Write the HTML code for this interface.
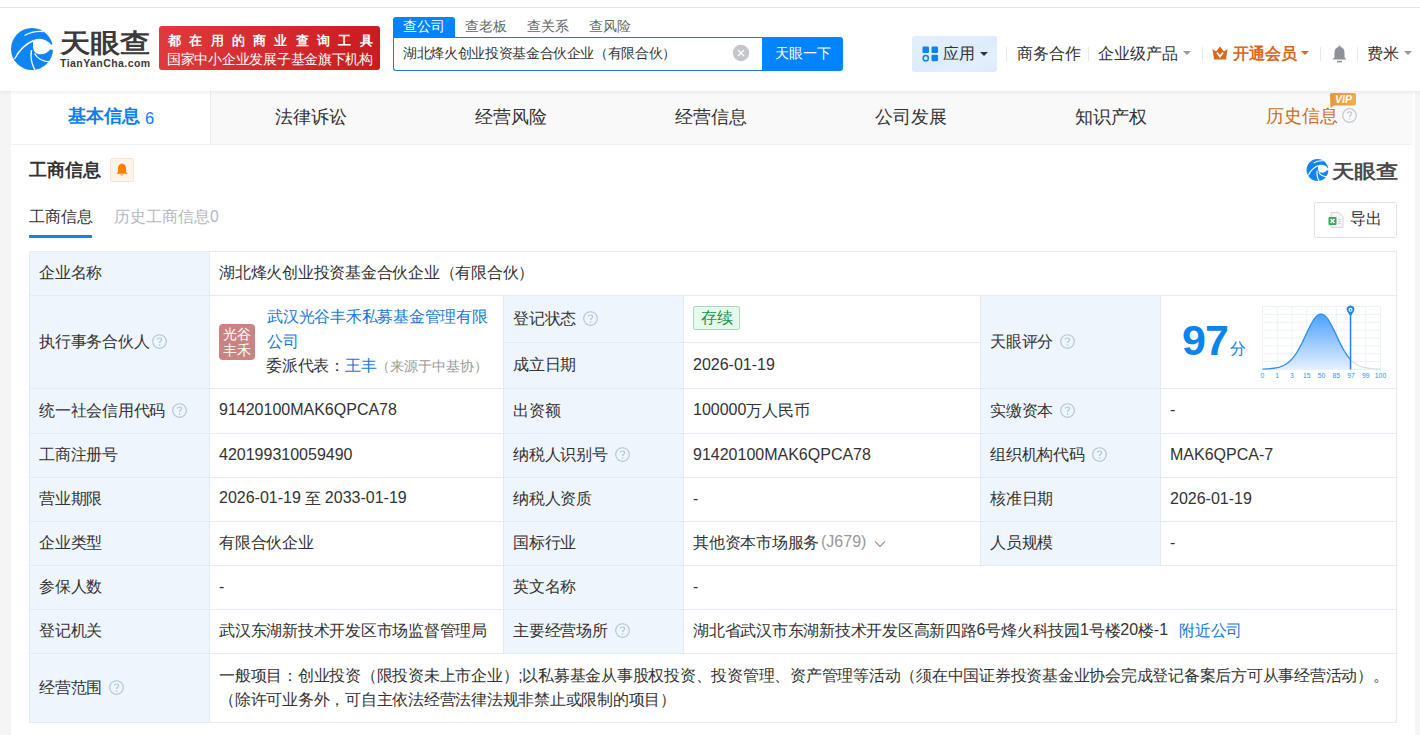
<!DOCTYPE html>
<html><head><meta charset="utf-8">
<style>
*{box-sizing:border-box;margin:0;padding:0}
html,body{width:1420px;height:735px;overflow:hidden}
body{position:relative;background:#f5f5f5;font-family:"Liberation Sans",sans-serif;color:#333;font-size:15.75px}
.a{position:absolute;white-space:nowrap}
#top{left:0;top:0;width:1420px;height:7px;background:#fff}
#topline{left:0;top:7px;width:1420px;height:1px;background:#e4e4e4}
#hdr{left:0;top:8px;width:1420px;height:83px;background:#fff;box-shadow:0 2px 4px rgba(0,0,0,.06);z-index:2}
#card{left:11px;top:91px;width:1404px;height:700px;background:#fff}
.tab{top:91px;height:53px;width:200px;background:#f9f9f9;text-align:center;line-height:53px;font-size:18px;color:#333}
.cell{position:absolute;border-right:1px solid #e4ebf3;border-bottom:1px solid #e4ebf3;padding-left:9px;display:flex;align-items:center;white-space:nowrap;letter-spacing:-0.25px}
.n{font-size:16px;letter-spacing:0;position:relative;top:-1px}
.lb{background:#eff5fc}
.q{display:inline-block;width:15px;height:15px;margin-left:7px;vertical-align:middle;position:relative;top:-1px}
.logo{position:absolute;left:9px;top:28px;width:36px;height:36px;border-radius:4px;background:#c98383;color:#fff;font-size:14px;line-height:16px;text-align:center;padding-top:2px;letter-spacing:0}
.tag{display:inline-block;height:24px;padding:0 6px 0 7px;position:relative;top:-1px;border:1px solid #a9dabb;background:#e5f9ec;color:#129a48;border-radius:2px;line-height:22px}
</style></head><body>
<div class="a" id="top"></div>
<div class="a" id="topline"></div>
<div class="a" id="hdr"></div>
<div class="a" id="card"></div>
<div class="a" style="left:0;top:0;z-index:3">
<!-- logo -->
<svg class="a" style="left:8px;top:24px" width="50" height="50" viewBox="0 0 50 50">
<circle cx="24" cy="25" r="21" fill="#0f84f5"/>
<path d="M25 17 C27 14.5 33 14 38 16.5 C41 18 42.5 19.5 43 21 L46 19 L46 26 L42 25.5 C40 29 35 31 30 30 C26.5 29 25 26 25 22Z" fill="#fff"/>
<path d="M16.5 11.5 Q25 6.5 35.5 7.5" stroke="#fff" stroke-width="1.3" fill="none"/>
<path d="M6.5 35 Q13 22 25.5 16.5" stroke="#fff" stroke-width="1.4" fill="none"/>
<path d="M23.5 26 Q21.5 37 27.5 47" stroke="#fff" stroke-width="1.4" fill="none"/>
<path d="M26.5 29.5 Q31 37.5 42.5 38" stroke="#fff" stroke-width="1.3" fill="none"/>
</svg>
<div class="a" style="left:60px;top:25px;font-size:30px;font-weight:bold;color:#3d3939;line-height:34px;transform-origin:0 0;transform:scale(1,0.857) translateY(5px)">天眼查</div>
<div class="a" style="left:60px;top:57px;font-size:10.5px;font-weight:bold;color:#3d3939;line-height:12px;letter-spacing:0.44px">TianYanCha.com</div>
<div class="a" style="left:159px;top:26px;width:221px;height:44px;border-radius:3px;background:linear-gradient(90deg,#e0393e,#c91b20)"></div>
<div class="a" style="left:168px;top:33px;font-size:12.5px;font-weight:bold;color:#fff;line-height:17px;letter-spacing:8.3px">都在用的商业查询工具</div>
<div class="a" style="left:167px;top:51px;font-size:13.5px;font-weight:500;color:#fff;line-height:17px;letter-spacing:-0.27px">国家中小企业发展子基金旗下机构</div>
<!-- search -->
<div class="a" style="left:393px;top:17px;width:62px;height:21px;background:#0084ff;border-radius:3px 3px 0 0;color:#fff;font-size:13.5px;line-height:20px;text-align:center">查公司</div>
<div class="a" style="left:455px;top:17px;width:62px;height:20px;color:#666;font-size:13.5px;line-height:20px;text-align:center">查老板</div>
<div class="a" style="left:517px;top:17px;width:62px;height:20px;color:#666;font-size:13.5px;line-height:20px;text-align:center">查关系</div>
<div class="a" style="left:579px;top:17px;width:62px;height:20px;color:#666;font-size:13.5px;line-height:20px;text-align:center">查风险</div>
<div class="a" style="left:393px;top:37px;width:370px;height:34px;border:1px solid #1f7bd8;border-right:none;border-radius:0 0 0 3px;background:#fff"></div>
<div class="a" style="left:403px;top:44px;font-size:13.5px;color:#333;line-height:20px;letter-spacing:-0.35px">湖北烽火创业投资基金合伙企业（有限合伙）</div>
<svg class="a" style="left:732px;top:44px" width="18" height="18" viewBox="0 0 18 18"><circle cx="9" cy="9" r="8.2" fill="#c4c6cc"/><path d="M6 6L12 12M12 6L6 12" stroke="#fff" stroke-width="1.2"/></svg>
<div class="a" style="left:762px;top:37px;width:81px;height:34px;background:#0084ff;border-radius:0 3px 3px 0;color:#fff;font-size:13.5px;line-height:34px;text-align:center">天眼一下</div>
<!-- right nav -->
<div class="a" style="left:912px;top:36px;width:85px;height:36px;border-radius:3px;background:linear-gradient(160deg,#e3effd,#ddecfc 55%,#e4effd 75%,#dbe9fb)"></div>
<svg class="a" style="left:922px;top:46px" width="17" height="16" viewBox="0 0 17 16"><rect x="0.5" y="0.5" width="6.5" height="6.5" rx="1.2" fill="#0a84f0"/><rect x="9.5" y="0.5" width="6.5" height="6.5" rx="1.2" fill="#0a84f0"/><circle cx="3.75" cy="12.2" r="2.6" fill="none" stroke="#0a84f0" stroke-width="1.5"/><rect x="9.5" y="8.8" width="6.5" height="6.5" rx="1.2" fill="#0a84f0"/></svg>
<div class="a" style="left:943px;top:44px;font-size:15.75px;color:#333;line-height:20px">应用</div>
<div class="a" style="left:980px;top:52px;width:0;height:0;border-left:4px solid transparent;border-right:4px solid transparent;border-top:4px solid #333"></div>
<div class="a" style="left:1006px;top:47px;width:1px;height:14px;background:#e8e8e8"></div>
<div class="a" style="left:1017px;top:44px;font-size:15.75px;color:#333;line-height:20px">商务合作</div>
<div class="a" style="left:1088px;top:47px;width:1px;height:14px;background:#e8e8e8"></div>
<div class="a" style="left:1098px;top:44px;font-size:15.75px;color:#333;line-height:20px">企业级产品</div>
<div class="a" style="left:1183px;top:51px;width:0;height:0;border-left:4px solid transparent;border-right:4px solid transparent;border-top:4px solid #999"></div>
<div class="a" style="left:1202px;top:47px;width:1px;height:14px;background:#e8e8e8"></div>
<svg class="a" style="left:1212px;top:46px" width="16" height="14" viewBox="0 0 16 14"><path d="M0.5 3 L4 5.5 L8 0.5 L12 5.5 L15.5 3 L14 13.5 L2 13.5Z" fill="#d9681b"/><path d="M5 6.5 L8 10.5 L11 6.5" stroke="#fff" stroke-width="1.8" fill="none"/></svg>
<div class="a" style="left:1233px;top:44px;font-size:15.75px;font-weight:bold;color:#d9681b;line-height:20px">开通会员</div>
<div class="a" style="left:1301px;top:51px;width:0;height:0;border-left:4px solid transparent;border-right:4px solid transparent;border-top:4px solid #d9681b"></div>
<div class="a" style="left:1320px;top:47px;width:1px;height:14px;background:#e8e8e8"></div>
<svg class="a" style="left:1332px;top:45px" width="15" height="18" viewBox="0 0 15 18"><path d="M6.5 1.2 Q7.5 0 8.5 1.2 L8.5 2 C11.5 2.6 12.5 5 12.5 8 L12.5 12.5 L14.5 14.5 L0.5 14.5 L2.5 12.5 L2.5 8 C2.5 5 3.5 2.6 6.5 2Z" fill="#8e9298"/><rect x="5" y="15.8" width="5" height="1.6" fill="#8e9298"/></svg>
<div class="a" style="left:1357px;top:47px;width:1px;height:14px;background:#e8e8e8"></div>
<div class="a" style="left:1367px;top:44px;font-size:15.75px;color:#333;line-height:20px">费米</div>
<div class="a" style="left:1404px;top:51px;width:0;height:0;border-left:4px solid transparent;border-right:4px solid transparent;border-top:4px solid #999"></div>
</div>


<!-- tabs -->
<div class="a" style="left:11px;top:144px;width:1401px;height:1px;background:#f1f1f1"></div>
<div class="a" style="left:210px;top:91px;width:1px;height:53px;background:#ececec;z-index:1"></div>
<div class="a tab" style="left:11px;background:#fff;color:#0a80ec;font-weight:bold;line-height:51px">基本信息<span style="font-weight:normal;font-size:16.5px;margin-left:5px;position:relative;top:2px">6</span></div>
<div class="a tab" style="left:211px">法律诉讼</div>
<div class="a tab" style="left:411px">经营风险</div>
<div class="a tab" style="left:611px">经营信息</div>
<div class="a tab" style="left:811px">公司发展</div>
<div class="a tab" style="left:1011px">知识产权</div>
<div class="a tab" style="left:1211px;width:202px;padding-right:2px;color:#cc6c26;line-height:50px">历史信息<svg style="display:inline-block;width:15px;height:15px;margin-left:4px;vertical-align:-1px" viewBox="0 0 15 15"><circle cx="7.5" cy="7.5" r="6.8" fill="none" stroke="#c3ccd5" stroke-width="1.3"/><path d="M5.4 5.6 C5.4 3.4 9.6 3.4 9.6 5.6 C9.6 7.2 7.5 7.2 7.5 9" fill="none" stroke="#c3ccd5" stroke-width="1.3"/><circle cx="7.5" cy="11" r="0.7" fill="#c3ccd5"/></svg></div>
<svg class="a" style="left:1329px;top:92px" width="28" height="17" viewBox="0 0 28 17"><defs><linearGradient id="vg" x1="0" y1="0" x2="1" y2="0"><stop offset="0" stop-color="#e8983a"/><stop offset="1" stop-color="#f2ac4e"/></linearGradient></defs><path d="M3 1 H25 Q27 1 27 3 V11 Q27 13.5 25 13.5 H5 L1.5 16 L1 3 Q1 1 3 1Z" fill="url(#vg)"/><text x="14.5" y="11.3" font-size="10.5" font-weight="bold" font-style="italic" fill="#fff" text-anchor="middle" font-family="Liberation Sans">VIP</text></svg>
<!-- section -->
<div class="a" style="left:29px;top:158px;font-size:18px;font-weight:bold;color:#333;line-height:24px">工商信息</div>
<div class="a" style="left:110px;top:158px;width:24px;height:24px;background:#fff4ea;border:1px solid #fbe3cf;border-radius:2px"></div>
<svg class="a" style="left:116px;top:163px" width="12" height="13" viewBox="0 0 12 13"><path d="M5.2 0.8 Q6 0 6.8 0.8 C9.5 1.5 10 3.8 10 6 L10 9 L11.6 10.8 L0.4 10.8 L2 9 L2 6 C2 3.8 2.5 1.5 5.2 0.8Z" fill="#ff7d00"/><path d="M4.3 11.6 L7.7 11.6 Q6 13.4 4.3 11.6Z" fill="#ff7d00"/></svg>
<div class="a" style="left:29px;top:205px;font-size:15.75px;color:#333;line-height:24px">工商信息</div>
<div class="a" style="left:29px;top:235px;width:63px;height:3px;background:#0a84f0"></div>
<div class="a" style="left:114px;top:205px;font-size:15.75px;color:#b4b8bf;line-height:24px">历史工商信息0</div>
<!-- right logo -->
<svg class="a" style="left:1305px;top:157px" width="26" height="26" viewBox="0 0 50 50">
<circle cx="24" cy="25" r="21" fill="#0f84f5"/>
<path d="M25 17 C27 14.5 33 14 38 16.5 C41 18 42.5 19.5 43 21 L46 19 L46 26 L42 25.5 C40 29 35 31 30 30 C26.5 29 25 26 25 22Z" fill="#fff"/>
<path d="M16.5 11.5 Q25 6.5 35.5 7.5" stroke="#fff" stroke-width="2" fill="none"/>
<path d="M6.5 35 Q13 22 25.5 16.5" stroke="#fff" stroke-width="2.2" fill="none"/>
<path d="M23.5 26 Q21.5 37 27.5 47" stroke="#fff" stroke-width="2.2" fill="none"/>
<path d="M26.5 29.5 Q31 37.5 42.5 38" stroke="#fff" stroke-width="2" fill="none"/>
</svg>
<div class="a" style="left:1332px;top:156px;font-size:22px;font-weight:bold;color:#4b4b4b;line-height:28px;transform-origin:0 0;transform:scaleY(0.85) translateY(5px)">天眼查</div>
<div class="a" style="left:1314px;top:202px;width:83px;height:36px;border:1px solid #dfe2e8;border-radius:3px;background:#fff"></div>
<svg class="a" style="left:1328px;top:212px" width="16" height="16" viewBox="0 0 16 16"><path d="M3 0.5 L11 0.5 L15 4.5 L15 15.5 L3 15.5Z" fill="#f4f5f7" stroke="#d5d8dd" stroke-width="1"/><rect x="0.5" y="5" width="8" height="8" rx="1" fill="#3aa660"/><path d="M2.6 7 L6.4 11 M6.4 7 L2.6 11" stroke="#fff" stroke-width="1.3"/><path d="M10 7.5h3M10 9.5h3M10 11.5h3" stroke="#cfd3d9" stroke-width="0.9"/></svg>
<div class="a" style="left:1350px;top:207px;font-size:15.75px;color:#333;line-height:24px">导出</div>

<div class="a" style="left:29px;top:251px;width:1368px;height:1px;background:#e4ebf3"></div>
<div class="cell lb" style="left:29px;top:252px;width:181px;height:44px;border-left:1px solid #e4ebf3;"><span>企业名称</span></div>
<div class="cell" style="left:210px;top:252px;width:1187px;height:44px;"><span>湖北烽火创业投资基金合伙企业（有限合伙）</span></div>
<div class="cell lb" style="left:29px;top:296px;width:181px;height:93px;border-left:1px solid #e4ebf3;"><span>执行事务合伙人<svg class="q" style="margin-left:3px" viewBox="0 0 15 15"><circle cx="7.5" cy="7.5" r="6.8" fill="none" stroke="#b0c5da" stroke-width="1.15"/><path d="M5.4 5.6 C5.4 3.4 9.6 3.4 9.6 5.6 C9.6 7.2 7.5 7.2 7.5 9" fill="none" stroke="#b0c5da" stroke-width="1.15"/><circle cx="7.5" cy="11" r="0.8" fill="#b0c5da"/></svg></span></div>
<div class="cell" style="left:210px;top:296px;width:294px;height:93px;"><span><div class="logo">光谷<br>丰禾</div><div style="position:absolute;left:57px;top:9px;line-height:24.5px;white-space:normal;width:230px;color:#1a78da">武汉光谷丰禾私募基金管理有限公司</div><div style="position:absolute;left:56px;top:58px;line-height:24px">委派代表：<span style="color:#1a78da">王丰</span><span style="color:#999;font-size:13.5px;letter-spacing:0">（来源于中基协）</span></div></span></div>
<div class="cell lb" style="left:504px;top:296px;width:180px;height:47px;"><span>登记状态<svg class="q" viewBox="0 0 15 15"><circle cx="7.5" cy="7.5" r="6.8" fill="none" stroke="#b0c5da" stroke-width="1.15"/><path d="M5.4 5.6 C5.4 3.4 9.6 3.4 9.6 5.6 C9.6 7.2 7.5 7.2 7.5 9" fill="none" stroke="#b0c5da" stroke-width="1.15"/><circle cx="7.5" cy="11" r="0.8" fill="#b0c5da"/></svg></span></div>
<div class="cell" style="left:684px;top:296px;width:297px;height:47px;"><span><span class="tag">存续</span></span></div>
<div class="cell lb" style="left:504px;top:343px;width:180px;height:46px;"><span>成立日期</span></div>
<div class="cell" style="left:684px;top:343px;width:297px;height:46px;"><span><span class="n">2026-01-19</span></span></div>
<div class="cell lb" style="left:981px;top:296px;width:180px;height:93px;"><span>天眼评分<svg class="q" viewBox="0 0 15 15"><circle cx="7.5" cy="7.5" r="6.8" fill="none" stroke="#b0c5da" stroke-width="1.15"/><path d="M5.4 5.6 C5.4 3.4 9.6 3.4 9.6 5.6 C9.6 7.2 7.5 7.2 7.5 9" fill="none" stroke="#b0c5da" stroke-width="1.15"/><circle cx="7.5" cy="11" r="0.8" fill="#b0c5da"/></svg></span></div>
<div class="cell" style="left:1161px;top:296px;width:236px;height:93px;"><span></span></div>
<div class="cell lb" style="left:29px;top:389px;width:181px;height:45px;border-left:1px solid #e4ebf3;"><span>统一社会信用代码<svg class="q" viewBox="0 0 15 15"><circle cx="7.5" cy="7.5" r="6.8" fill="none" stroke="#b0c5da" stroke-width="1.15"/><path d="M5.4 5.6 C5.4 3.4 9.6 3.4 9.6 5.6 C9.6 7.2 7.5 7.2 7.5 9" fill="none" stroke="#b0c5da" stroke-width="1.15"/><circle cx="7.5" cy="11" r="0.8" fill="#b0c5da"/></svg></span></div>
<div class="cell" style="left:210px;top:389px;width:294px;height:45px;"><span><span class="n">91420100MAK6QPCA78</span></span></div>
<div class="cell lb" style="left:504px;top:389px;width:180px;height:45px;"><span>出资额</span></div>
<div class="cell" style="left:684px;top:389px;width:297px;height:45px;"><span><span class="n">100000</span>万人民币</span></div>
<div class="cell lb" style="left:981px;top:389px;width:180px;height:45px;"><span>实缴资本<svg class="q" viewBox="0 0 15 15"><circle cx="7.5" cy="7.5" r="6.8" fill="none" stroke="#b0c5da" stroke-width="1.15"/><path d="M5.4 5.6 C5.4 3.4 9.6 3.4 9.6 5.6 C9.6 7.2 7.5 7.2 7.5 9" fill="none" stroke="#b0c5da" stroke-width="1.15"/><circle cx="7.5" cy="11" r="0.8" fill="#b0c5da"/></svg></span></div>
<div class="cell" style="left:1161px;top:389px;width:236px;height:45px;"><span><span class="n">-</span></span></div>
<div class="cell lb" style="left:29px;top:434px;width:181px;height:44px;border-left:1px solid #e4ebf3;"><span>工商注册号</span></div>
<div class="cell" style="left:210px;top:434px;width:294px;height:44px;"><span><span class="n">420199310059490</span></span></div>
<div class="cell lb" style="left:504px;top:434px;width:180px;height:44px;"><span>纳税人识别号<svg class="q" viewBox="0 0 15 15"><circle cx="7.5" cy="7.5" r="6.8" fill="none" stroke="#b0c5da" stroke-width="1.15"/><path d="M5.4 5.6 C5.4 3.4 9.6 3.4 9.6 5.6 C9.6 7.2 7.5 7.2 7.5 9" fill="none" stroke="#b0c5da" stroke-width="1.15"/><circle cx="7.5" cy="11" r="0.8" fill="#b0c5da"/></svg></span></div>
<div class="cell" style="left:684px;top:434px;width:297px;height:44px;"><span><span class="n">91420100MAK6QPCA78</span></span></div>
<div class="cell lb" style="left:981px;top:434px;width:180px;height:44px;"><span>组织机构代码<svg class="q" viewBox="0 0 15 15"><circle cx="7.5" cy="7.5" r="6.8" fill="none" stroke="#b0c5da" stroke-width="1.15"/><path d="M5.4 5.6 C5.4 3.4 9.6 3.4 9.6 5.6 C9.6 7.2 7.5 7.2 7.5 9" fill="none" stroke="#b0c5da" stroke-width="1.15"/><circle cx="7.5" cy="11" r="0.8" fill="#b0c5da"/></svg></span></div>
<div class="cell" style="left:1161px;top:434px;width:236px;height:44px;"><span><span class="n">MAK6QPCA-7</span></span></div>
<div class="cell lb" style="left:29px;top:478px;width:181px;height:44px;border-left:1px solid #e4ebf3;"><span>营业期限</span></div>
<div class="cell" style="left:210px;top:478px;width:294px;height:44px;"><span><span class="n">2026-01-19</span> 至 <span class="n">2033-01-19</span></span></div>
<div class="cell lb" style="left:504px;top:478px;width:180px;height:44px;"><span>纳税人资质</span></div>
<div class="cell" style="left:684px;top:478px;width:297px;height:44px;"><span><span class="n">-</span></span></div>
<div class="cell lb" style="left:981px;top:478px;width:180px;height:44px;"><span>核准日期</span></div>
<div class="cell" style="left:1161px;top:478px;width:236px;height:44px;"><span><span class="n">2026-01-19</span></span></div>
<div class="cell lb" style="left:29px;top:522px;width:181px;height:44px;border-left:1px solid #e4ebf3;"><span>企业类型</span></div>
<div class="cell" style="left:210px;top:522px;width:294px;height:44px;"><span>有限合伙企业</span></div>
<div class="cell lb" style="left:504px;top:522px;width:180px;height:44px;"><span>国标行业</span></div>
<div class="cell" style="left:684px;top:522px;width:297px;height:44px;"><span>其他资本市场服务<span class="n" style="color:#999;margin-left:2px">(J679)</span><svg width="12" height="8" viewBox="0 0 12 8" style="margin-left:8px"><path d="M1 1.5 L6 6.5 L11 1.5" stroke="#999" stroke-width="1.2" fill="none"/></svg></span></div>
<div class="cell lb" style="left:981px;top:522px;width:180px;height:44px;"><span>人员规模</span></div>
<div class="cell" style="left:1161px;top:522px;width:236px;height:44px;"><span><span class="n">-</span></span></div>
<div class="cell lb" style="left:29px;top:566px;width:181px;height:44px;border-left:1px solid #e4ebf3;"><span>参保人数</span></div>
<div class="cell" style="left:210px;top:566px;width:294px;height:44px;"><span><span class="n">-</span></span></div>
<div class="cell lb" style="left:504px;top:566px;width:180px;height:44px;"><span>英文名称</span></div>
<div class="cell" style="left:684px;top:566px;width:713px;height:44px;"><span><span class="n">-</span></span></div>
<div class="cell lb" style="left:29px;top:610px;width:181px;height:44px;border-left:1px solid #e4ebf3;"><span>登记机关</span></div>
<div class="cell" style="left:210px;top:610px;width:294px;height:44px;"><span>武汉东湖新技术开发区市场监督管理局</span></div>
<div class="cell lb" style="left:504px;top:610px;width:180px;height:44px;"><span>主要经营场所<svg class="q" viewBox="0 0 15 15"><circle cx="7.5" cy="7.5" r="6.8" fill="none" stroke="#b0c5da" stroke-width="1.15"/><path d="M5.4 5.6 C5.4 3.4 9.6 3.4 9.6 5.6 C9.6 7.2 7.5 7.2 7.5 9" fill="none" stroke="#b0c5da" stroke-width="1.15"/><circle cx="7.5" cy="11" r="0.8" fill="#b0c5da"/></svg></span></div>
<div class="cell" style="left:684px;top:610px;width:713px;height:44px;"><span>湖北省武汉市东湖新技术开发区高新四路<span class="n">6</span>号烽火科技园<span class="n">1</span>号楼<span class="n">20</span>楼<span class="n">-1</span><span style="color:#1a78da;margin-left:11px">附近公司</span></span></div>
<div class="cell lb" style="left:29px;top:654px;width:181px;height:69px;border-left:1px solid #e4ebf3;"><span>经营范围<svg class="q" viewBox="0 0 15 15"><circle cx="7.5" cy="7.5" r="6.8" fill="none" stroke="#b0c5da" stroke-width="1.15"/><path d="M5.4 5.6 C5.4 3.4 9.6 3.4 9.6 5.6 C9.6 7.2 7.5 7.2 7.5 9" fill="none" stroke="#b0c5da" stroke-width="1.15"/><circle cx="7.5" cy="11" r="0.8" fill="#b0c5da"/></svg></span></div>
<div class="cell" style="left:210px;top:654px;width:1187px;height:69px;"><span><div style="line-height:24px">一般项目：创业投资（限投资未上市企业）;以私募基金从事股权投资、投资管理、资产管理等活动（须在中国证券投资基金业协会完成登记备案后方可从事经营活动）。<br>（除许可业务外，可自主依法经营法律法规非禁止或限制的项目）</div></span></div>

<div class="a" style="left:1182px;top:317px;font-size:43px;letter-spacing:-1px;font-weight:bold;color:#0a84f0;line-height:46px">97</div><div class="a" style="left:1230px;top:339px;font-size:15.5px;color:#0a84f0;line-height:20px">分</div><svg class="a" style="left:1255px;top:300px" width="135" height="85" viewBox="1255 300 135 85"><line x1="1262.50" y1="306.5" x2="1262.50" y2="369.5" stroke="#ecf1f8" stroke-width="1"/><line x1="1262.5" y1="306.50" x2="1380.5" y2="306.50" stroke="#ecf1f8" stroke-width="1"/><line x1="1277.25" y1="306.5" x2="1277.25" y2="369.5" stroke="#ecf1f8" stroke-width="1"/><line x1="1262.5" y1="314.38" x2="1380.5" y2="314.38" stroke="#ecf1f8" stroke-width="1"/><line x1="1292.00" y1="306.5" x2="1292.00" y2="369.5" stroke="#ecf1f8" stroke-width="1"/><line x1="1262.5" y1="322.25" x2="1380.5" y2="322.25" stroke="#ecf1f8" stroke-width="1"/><line x1="1306.75" y1="306.5" x2="1306.75" y2="369.5" stroke="#ecf1f8" stroke-width="1"/><line x1="1262.5" y1="330.12" x2="1380.5" y2="330.12" stroke="#ecf1f8" stroke-width="1"/><line x1="1321.50" y1="306.5" x2="1321.50" y2="369.5" stroke="#ecf1f8" stroke-width="1"/><line x1="1262.5" y1="338.00" x2="1380.5" y2="338.00" stroke="#ecf1f8" stroke-width="1"/><line x1="1336.25" y1="306.5" x2="1336.25" y2="369.5" stroke="#ecf1f8" stroke-width="1"/><line x1="1262.5" y1="345.88" x2="1380.5" y2="345.88" stroke="#ecf1f8" stroke-width="1"/><line x1="1351.00" y1="306.5" x2="1351.00" y2="369.5" stroke="#ecf1f8" stroke-width="1"/><line x1="1262.5" y1="353.75" x2="1380.5" y2="353.75" stroke="#ecf1f8" stroke-width="1"/><line x1="1365.75" y1="306.5" x2="1365.75" y2="369.5" stroke="#ecf1f8" stroke-width="1"/><line x1="1262.5" y1="361.62" x2="1380.5" y2="361.62" stroke="#ecf1f8" stroke-width="1"/><line x1="1380.50" y1="306.5" x2="1380.50" y2="369.5" stroke="#ecf1f8" stroke-width="1"/><line x1="1262.5" y1="369.50" x2="1380.5" y2="369.50" stroke="#ecf1f8" stroke-width="1"/><defs><linearGradient id="g" x1="0" y1="0" x2="0" y2="1"><stop offset="0" stop-color="#4aa0ff"/><stop offset="1" stop-color="#e6f1ff"/></linearGradient></defs><path d="M1262.5 369.5 L1262.5 369.12 L1263.5 369.07 L1264.5 369.03 L1265.5 368.97 L1266.5 368.92 L1267.5 368.85 L1268.5 368.78 L1269.5 368.70 L1270.5 368.61 L1271.5 368.50 L1272.5 368.39 L1273.5 368.26 L1274.5 368.11 L1275.5 367.94 L1276.5 367.75 L1277.5 367.53 L1278.5 367.29 L1279.5 367.01 L1280.5 366.70 L1281.5 366.35 L1282.5 365.95 L1283.5 365.50 L1284.5 365.00 L1285.5 364.44 L1286.5 363.81 L1287.5 363.11 L1288.5 362.34 L1289.5 361.48 L1290.5 360.54 L1291.5 359.51 L1292.5 358.39 L1293.5 357.17 L1294.5 355.85 L1295.5 354.43 L1296.5 352.91 L1297.5 351.29 L1298.5 349.58 L1299.5 347.78 L1300.5 345.90 L1301.5 343.95 L1302.5 341.93 L1303.5 339.86 L1304.5 337.76 L1305.5 335.63 L1306.5 333.50 L1307.5 331.39 L1308.5 329.31 L1309.5 327.28 L1310.5 325.32 L1311.5 323.46 L1312.5 321.72 L1313.5 320.11 L1314.5 318.66 L1315.5 317.38 L1316.5 316.29 L1317.5 315.40 L1318.5 314.72 L1319.5 314.26 L1320.5 314.03 L1321.5 314.03 L1322.5 314.26 L1323.5 314.72 L1324.5 315.40 L1325.5 316.29 L1326.5 317.38 L1327.5 318.66 L1328.5 320.11 L1329.5 321.72 L1330.5 323.46 L1331.5 325.32 L1332.5 327.28 L1333.5 329.31 L1334.5 331.39 L1335.5 333.50 L1336.5 335.63 L1337.5 337.76 L1338.5 339.86 L1339.5 341.93 L1340.5 343.95 L1341.5 345.90 L1342.5 347.78 L1343.5 349.58 L1344.5 351.29 L1345.5 352.91 L1346.5 354.43 L1347.5 355.85 L1348.5 357.17 L1349.5 358.39 L1350.5 359.51 L1350.5 369.5 Z" fill="url(#g)"/><path d="M1262.5 369.12 L1263.5 369.07 L1264.5 369.03 L1265.5 368.97 L1266.5 368.92 L1267.5 368.85 L1268.5 368.78 L1269.5 368.70 L1270.5 368.61 L1271.5 368.50 L1272.5 368.39 L1273.5 368.26 L1274.5 368.11 L1275.5 367.94 L1276.5 367.75 L1277.5 367.53 L1278.5 367.29 L1279.5 367.01 L1280.5 366.70 L1281.5 366.35 L1282.5 365.95 L1283.5 365.50 L1284.5 365.00 L1285.5 364.44 L1286.5 363.81 L1287.5 363.11 L1288.5 362.34 L1289.5 361.48 L1290.5 360.54 L1291.5 359.51 L1292.5 358.39 L1293.5 357.17 L1294.5 355.85 L1295.5 354.43 L1296.5 352.91 L1297.5 351.29 L1298.5 349.58 L1299.5 347.78 L1300.5 345.90 L1301.5 343.95 L1302.5 341.93 L1303.5 339.86 L1304.5 337.76 L1305.5 335.63 L1306.5 333.50 L1307.5 331.39 L1308.5 329.31 L1309.5 327.28 L1310.5 325.32 L1311.5 323.46 L1312.5 321.72 L1313.5 320.11 L1314.5 318.66 L1315.5 317.38 L1316.5 316.29 L1317.5 315.40 L1318.5 314.72 L1319.5 314.26 L1320.5 314.03 L1321.5 314.03 L1322.5 314.26 L1323.5 314.72 L1324.5 315.40 L1325.5 316.29 L1326.5 317.38 L1327.5 318.66 L1328.5 320.11 L1329.5 321.72 L1330.5 323.46 L1331.5 325.32 L1332.5 327.28 L1333.5 329.31 L1334.5 331.39 L1335.5 333.50 L1336.5 335.63 L1337.5 337.76 L1338.5 339.86 L1339.5 341.93 L1340.5 343.95 L1341.5 345.90 L1342.5 347.78 L1343.5 349.58 L1344.5 351.29 L1345.5 352.91 L1346.5 354.43 L1347.5 355.85 L1348.5 357.17 L1349.5 358.39 L1350.5 359.51" fill="none" stroke="#2b8ef5" stroke-width="1.3"/><path d="M1350.5 359.51 L1351.5 360.54 L1352.5 361.48 L1353.5 362.34 L1354.5 363.11 L1355.5 363.81 L1356.5 364.44 L1357.5 365.00 L1358.5 365.50 L1359.5 365.95 L1360.5 366.35 L1361.5 366.70 L1362.5 367.01 L1363.5 367.29 L1364.5 367.53 L1365.5 367.75 L1366.5 367.94 L1367.5 368.11 L1368.5 368.26 L1369.5 368.39 L1370.5 368.50 L1371.5 368.61 L1372.5 368.70 L1373.5 368.78 L1374.5 368.85 L1375.5 368.92 L1376.5 368.97 L1377.5 369.03 L1378.5 369.07 L1379.5 369.12 L1380.5 369.15" fill="none" stroke="#d9dee6" stroke-width="1.3"/><line x1="1350.5" y1="313" x2="1350.5" y2="369.5" stroke="#1e86ee" stroke-width="1.5"/><path d="M1350.5 316.5 L1347.3 311.5 A3.8 3.8 0 1 1 1353.7 311.5 Z" fill="#1e86ee"/><circle cx="1350.5" cy="309.8" r="2" fill="#fff"/><circle cx="1350.5" cy="309.8" r="0.9" fill="#1e86ee"/><text x="1262.5" y="378" font-size="6.8" fill="#3b93ee" text-anchor="middle" font-family="Liberation Sans">0</text><text x="1277.2" y="378" font-size="6.8" fill="#3b93ee" text-anchor="middle" font-family="Liberation Sans">1</text><text x="1292.0" y="378" font-size="6.8" fill="#3b93ee" text-anchor="middle" font-family="Liberation Sans">3</text><text x="1306.8" y="378" font-size="6.8" fill="#3b93ee" text-anchor="middle" font-family="Liberation Sans">15</text><text x="1321.5" y="378" font-size="6.8" fill="#3b93ee" text-anchor="middle" font-family="Liberation Sans">50</text><text x="1336.2" y="378" font-size="6.8" fill="#3b93ee" text-anchor="middle" font-family="Liberation Sans">85</text><text x="1351.0" y="378" font-size="6.8" fill="#3b93ee" text-anchor="middle" font-family="Liberation Sans">97</text><text x="1365.8" y="378" font-size="6.8" fill="#3b93ee" text-anchor="middle" font-family="Liberation Sans">99</text><text x="1380.5" y="378" font-size="6.8" fill="#3b93ee" text-anchor="middle" font-family="Liberation Sans">100</text></svg>
</body></html>
